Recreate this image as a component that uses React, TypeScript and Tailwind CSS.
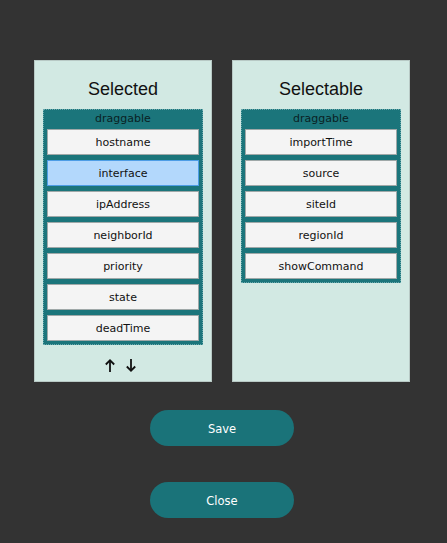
import React from "react";

const Up = () => (
  <svg width="10" height="13" viewBox="0 0 10 13" fill="none" stroke="#111" strokeWidth="1.8" strokeLinecap="butt" strokeLinejoin="miter">
    <path d="M5 13V1.5" />
    <path d="M0.8 5.5L5 1.3L9.2 5.5" />
  </svg>
);
const Down = () => (
  <svg width="10" height="13" viewBox="0 0 10 13" fill="none" stroke="#111" strokeWidth="1.8" strokeLinecap="butt" strokeLinejoin="miter">
    <path d="M5 0V11.5" />
    <path d="M0.8 7.5L5 11.7L9.2 7.5" />
  </svg>
);

function Item({ label, active }: { label: string; active?: boolean }) {
  return (
    <div
      className={
        active
          ? "h-[26px] pt-[2px] flex items-center justify-center border border-[#4d9de6] bg-[#b3d8fc] text-[11px] text-[#111]"
          : "h-[26px] pt-[2px] flex items-center justify-center border border-[#9fa8a8] bg-[#f4f4f4] text-[11px] text-[#111]"
      }
    >
      {label}
    </div>
  );
}

function Panel({ title, items, active, arrows }: { title: string; items: string[]; active?: string; arrows?: boolean }) {
  return (
    <div className="w-[178px] h-[322px] bg-[#d2e9e3] border border-[#b8c9c5] flex flex-col items-stretch pt-[14px] px-[8px]">
      <div className="h-[28px] leading-[28px] text-center text-[18px] text-[#111]" style={{ fontFamily: '"Liberation Sans", Arial, sans-serif' }}>
        {title}
      </div>
      <div className="mt-[6px] bg-[#1b757b] border border-dotted border-[#6aa9ad] px-[3px] pb-[3px] flex flex-col">
        <div className="h-[19px] leading-[17px] text-center text-[11px] text-[#0a2224]">draggable</div>
        <div className="flex flex-col gap-[5px]">
          {items.map((it) => (
            <Item key={it} label={it} active={it === active} />
          ))}
        </div>
      </div>
      {arrows && (
        <div className="mt-[14px] flex justify-center gap-[11px] pr-[5px]">
          <Up />
          <Down />
        </div>
      )}
    </div>
  );
}

export default function App() {
  return (
    <div className="w-[447px] h-[543px] bg-[#333333] flex flex-col" style={{ fontFamily: '"DejaVu Sans", Verdana, sans-serif' }}>
      <div className="pt-[60px] pl-[34px] flex gap-[20px]">
        <Panel
          title="Selected"
          items={["hostname", "interface", "ipAddress", "neighborId", "priority", "state", "deadTime"]}
          active="interface"
          arrows
        />
        <Panel title="Selectable" items={["importTime", "source", "siteId", "regionId", "showCommand"]} />
      </div>
      <div className="flex flex-col items-center gap-[36px] mt-[28px] pr-[3px]">
        <button className="w-[144px] h-[36px] pt-[3px] rounded-full bg-[#1a7379] text-white text-[11.5px]">Save</button>
        <button className="w-[144px] h-[36px] pt-[3px] rounded-full bg-[#1a7379] text-white text-[11.5px]">Close</button>
      </div>
    </div>
  );
}
